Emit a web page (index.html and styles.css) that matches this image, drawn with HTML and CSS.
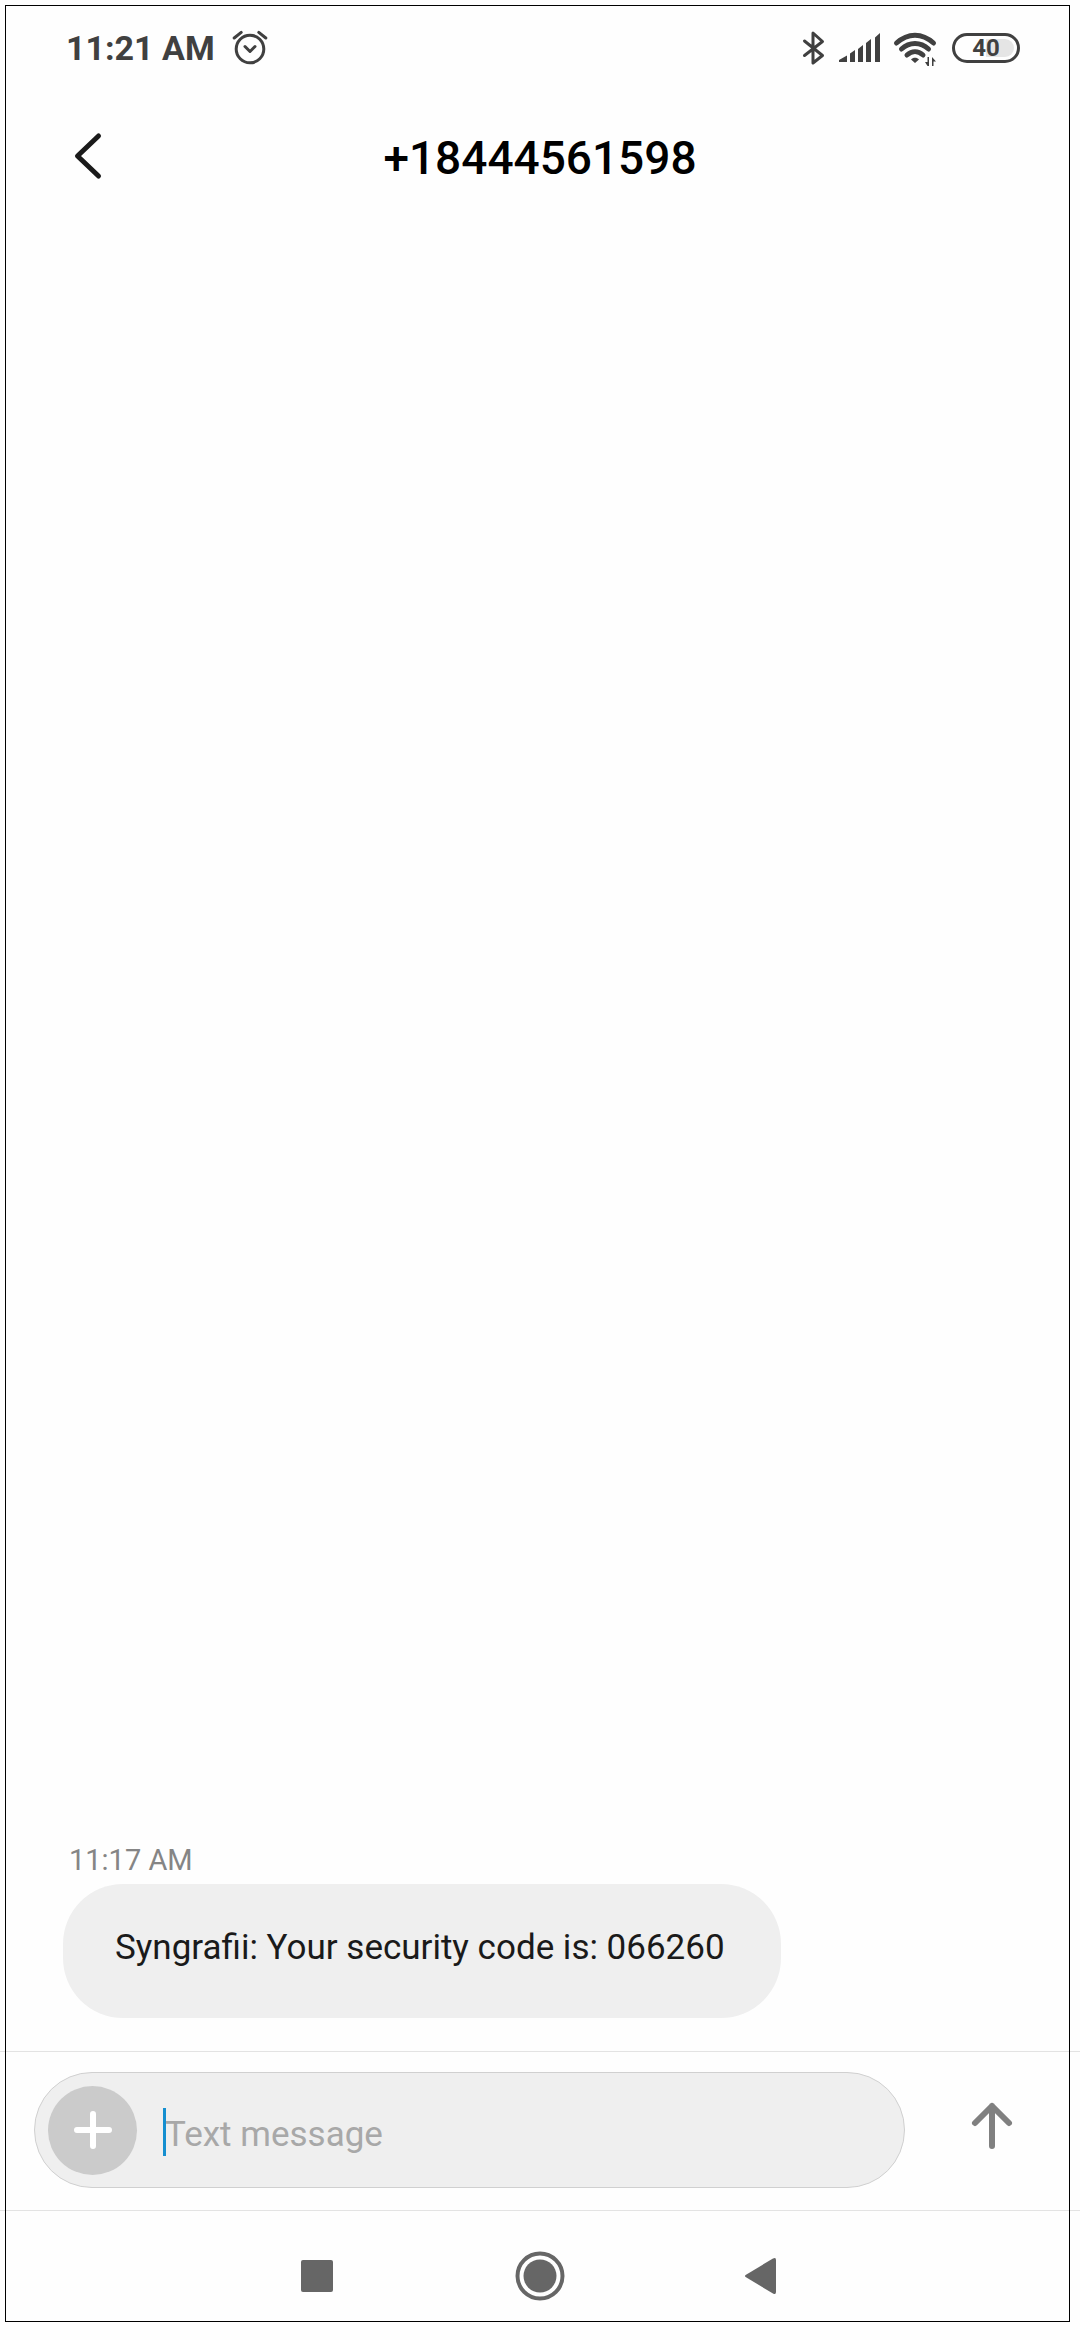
FILE: index.html
```html
<!DOCTYPE html>
<html lang="en">
<head>
<meta charset="UTF-8">
<meta name="viewport" content="width=device-width, initial-scale=1.0">
<title>+18444561598</title>
<link rel="stylesheet" href="styles.css">
</head>
<body>
<div class="status-bar">
  <div class="status-left">
    <span class="clock">11:21 AM</span>
    <svg class="alarm" width="36" height="36" viewBox="0 0 36 36">
      <circle cx="18" cy="19" r="13.8"/>
      <path d="M13 16.5l5 5 5-5M2.2 8l7-5.6M33.8 8l-7-5.6"/>
    </svg>
  </div>
  <div class="status-right">
    <svg class="bluetooth" width="22" height="34" viewBox="0 0 22 34">
      <path d="M1.5 10L19.5 24.500 10 32V2L19.5 10.500 1.500 24.500"/>
    </svg>
    <svg class="signal" width="41" height="30" viewBox="0 0 41 30">
      <path d="M0 29v-2l8-4.500v6.500zM11 29V20.500l5-3.500v12zM19 29V16l5-4v17zM27 29V10l5-4v23zM36 29V4.500l5-4.500v29z"/>
    </svg>
    <svg class="wifi" width="44" height="30" viewBox="0 0 44 30">
      <path class="arc" d="M2.500 10C14-.5 28-.5 39.500 10M7.500 16c8-7.500 19-7.500 27 0M13 22c5-4.500 11-4.500 16 0"/>
      <path d="M21 30l-4-3.500c2-2.500 6-2.500 8 0zM35 24v9h-1.500L31 29h2.500v-5zM38 33v-9l4 4.500h-2.500V33z"/>
    </svg>
    <div class="battery">40</div>
  </div>
</div>

<header class="header">
  <button class="back" aria-label="Back">
    <svg width="28" height="48" viewBox="0 0 28 48">
      <path d="M24.500 4L3.500 24l21 20"/>
    </svg>
  </button>
  <h1>+18444561598</h1>
</header>

<main class="messages">
  <time class="msg-time">11:17 AM</time>
  <p class="bubble">Syngrafii: Your security code is: 066260</p>
</main>

<form class="composer">
  <div class="field">
    <button type="button" class="add" aria-label="Add attachment">
      <svg width="40" height="40" viewBox="0 0 40 40">
        <path d="M20 4v32M4 20h32"/>
      </svg>
    </button>
    <div class="text-wrap">
      <input type="text" class="text" placeholder="Text message" aria-label="Text message">
      <span class="caret"></span>
    </div>
  </div>
  <button type="button" class="send" aria-label="Send">
    <svg width="40" height="48" viewBox="0 0 40 48">
      <path d="M20 44V4M3 21L20 4l17 17"/>
    </svg>
  </button>
</form>

<nav class="nav-bar">
  <button aria-label="Recent apps">
    <svg width="32" height="32" viewBox="0 0 32 32"><rect width="32" height="32" rx="2"/></svg>
  </button>
  <button aria-label="Home">
    <svg width="50" height="50" viewBox="0 0 50 50">
      <circle class="ring" cx="25" cy="25" r="22.500"/>
      <circle cx="25" cy="25" r="16.500"/>
    </svg>
  </button>
  <button aria-label="Go back">
    <svg width="32" height="36" viewBox="2 0 32 36">
      <path d="M.6 17L28 .5q3-1.500 3 1.500v32q0 3-3 1.500L.6 19q-1.200-1 0-2z"/>
    </svg>
  </button>
</nav>
<div class="frame"></div>
</body>
</html>
```

FILE: styles.css
```css
* {
  box-sizing: border-box;
}
body {
  position: relative;
  display: flex;
  flex-direction: column;
  min-height: 100vh;
  margin: 0;
  background-color: #fefefe;
  color: #1a1a1a;
  font-family: Roboto, "Liberation Sans", sans-serif;
}
button {
  display: flex;
  align-items: center;
  justify-content: center;
  padding: 0;
  border: none;
  background: none;
  cursor: pointer;
}
svg {
  display: block;
  overflow: visible;
}
.frame {
  position: absolute;
  top: 5px;
  right: 10px;
  bottom: 18px;
  left: 5px;
  border: 1px solid #000;
  pointer-events: none;
}

/* status bar */
.status-bar {
  display: flex;
  align-items: center;
  justify-content: space-between;
  height: 96px;
  padding: 0 60px 0 66px;
  color: #404040;
}
.status-left {
  display: flex;
  align-items: center;
  gap: 17px;
}
.status-right {
  display: flex;
  align-items: center;
  gap: 14px;
}
.clock {
  font-size: 34px;
  font-weight: 700;
}
.status-bar svg {
  fill: #404040;
}
.status-bar .alarm,
.status-bar .bluetooth,
.status-bar .arc {
  fill: none;
  stroke: #404040;
  stroke-width: 3;
  stroke-linecap: round;
  stroke-linejoin: round;
}
.status-bar .arc {
  stroke-width: 5;
}
.battery {
  width: 68px;
  height: 30px;
  border: 3px solid #404040;
  border-radius: 15px;
  padding: 3px;
  background: linear-gradient(to right, transparent 50%, #e5e5e5 50%) content-box;
  font-size: 24px;
  font-weight: 700;
  line-height: 18px;
  text-align: center;
}

/* header */
.header {
  display: grid;
  grid-template-columns: 102px 1fr 102px;
  align-items: center;
  height: 124px;
}
.back {
  justify-self: end;
  margin-bottom: 4px;
}
.back svg {
  fill: none;
  stroke: #1a1a1a;
  stroke-width: 5;
  stroke-linecap: round;
  stroke-linejoin: round;
}
.header h1 {
  margin: 0;
  color: #000;
  font-size: 46px;
  font-weight: 500;
  text-align: center;
}

/* messages */
.messages {
  flex: 1;
  display: flex;
  flex-direction: column;
  align-items: flex-start;
  justify-content: flex-end;
  padding: 0 63px 33px;
}
.msg-time {
  padding-left: 6px;
  margin-bottom: 6px;
  color: #858585;
  font-size: 29px;
  line-height: 36px;
}
.bubble {
  margin: 0;
  padding: 43px 56px 49px 52px;
  border-radius: 60px;
  background-color: #efefef;
  font-size: 35px;
  line-height: 42px;
}

/* composer */
.composer {
  display: flex;
  align-items: center;
  padding: 20px 68px 22px 34px;
  border-top: 1px solid #e3e3e3;
  border-bottom: 1px solid #e3e3e3;
}
.field {
  flex: 1;
  display: flex;
  align-items: center;
  gap: 26px;
  height: 116px;
  padding: 0 40px 0 13px;
  border: 1px solid #d0d0d0;
  border-radius: 58px;
  background-color: #efefef;
}
.add {
  width: 89px;
  height: 89px;
  border-radius: 50%;
  background-color: #cbcbcb;
}
.add svg {
  fill: none;
  stroke: #fff;
  stroke-width: 6;
  stroke-linecap: round;
}
.text-wrap {
  position: relative;
  flex: 1;
  padding-top: 4px;
}
.text {
  display: block;
  width: 100%;
  height: 48px;
  padding: 4px 0 0 2px;
  border: none;
  outline: none;
  background: none;
  color: #1a1a1a;
  font-family: inherit;
  font-size: 35px;
}
.text::placeholder {
  color: #a8a8a8;
}
.caret {
  position: absolute;
  bottom: 0;
  left: 0;
  width: 3px;
  height: 48px;
  background-color: #158fd0;
}
.send {
  margin: 0 0 8px 67px;
}
.send svg {
  fill: none;
  stroke: #808080;
  stroke-width: 6;
  stroke-linecap: round;
  stroke-linejoin: round;
}

/* bottom navigation */
.nav-bar {
  display: flex;
  align-items: center;
  justify-content: center;
  gap: 182px;
  height: 129px;
}
.nav-bar svg {
  fill: #666;
}
.nav-bar .ring {
  fill: none;
  stroke: #666;
  stroke-width: 4;
}
```
